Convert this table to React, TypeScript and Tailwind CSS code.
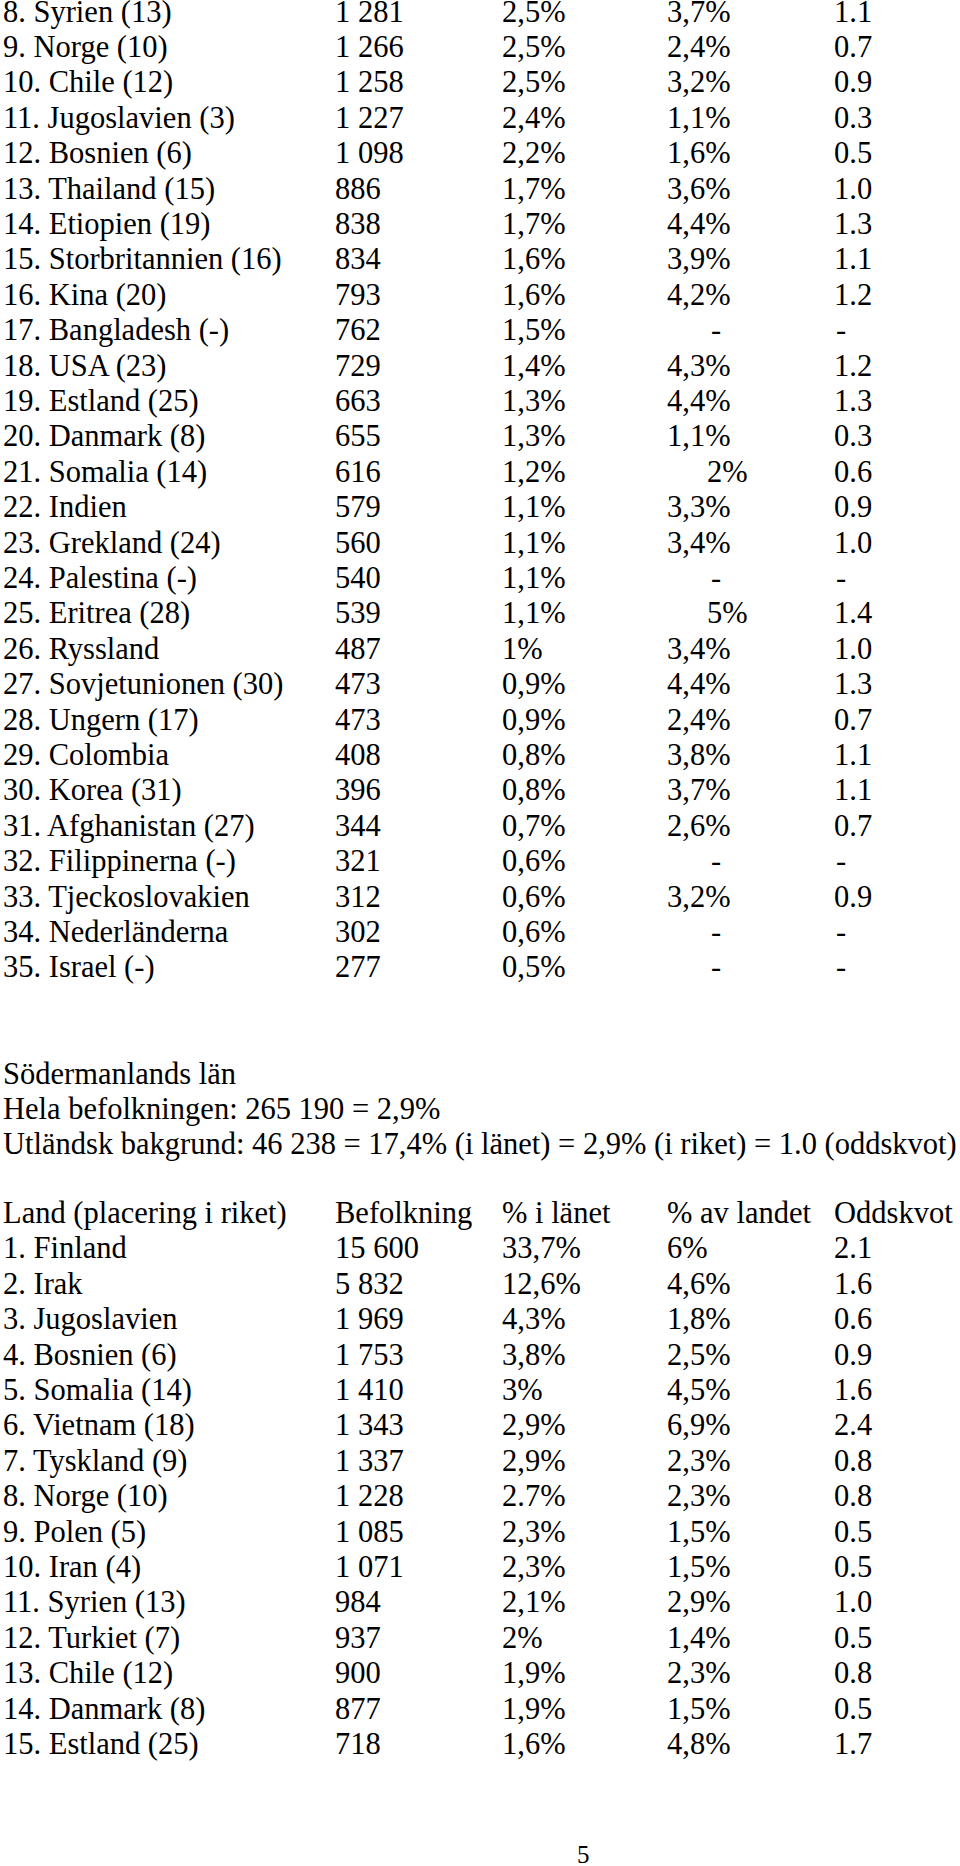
type Rad = [string, string, string, string, string];

// Riket: placering 8–35 (fortsättning från föregående sida)
const riket: Rad[] = [
  ["8. Syrien (13)", "1 281", "2,5%", "3,7%", "1.1"],
  ["9. Norge (10)", "1 266", "2,5%", "2,4%", "0.7"],
  ["10. Chile (12)", "1 258", "2,5%", "3,2%", "0.9"],
  ["11. Jugoslavien (3)", "1 227", "2,4%", "1,1%", "0.3"],
  ["12. Bosnien (6)", "1 098", "2,2%", "1,6%", "0.5"],
  ["13. Thailand (15)", "886", "1,7%", "3,6%", "1.0"],
  ["14. Etiopien (19)", "838", "1,7%", "4,4%", "1.3"],
  ["15. Storbritannien (16)", "834", "1,6%", "3,9%", "1.1"],
  ["16. Kina (20)", "793", "1,6%", "4,2%", "1.2"],
  ["17. Bangladesh (-)", "762", "1,5%", "-", "-"],
  ["18. USA (23)", "729", "1,4%", "4,3%", "1.2"],
  ["19. Estland (25)", "663", "1,3%", "4,4%", "1.3"],
  ["20. Danmark (8)", "655", "1,3%", "1,1%", "0.3"],
  ["21. Somalia (14)", "616", "1,2%", "2%", "0.6"],
  ["22. Indien", "579", "1,1%", "3,3%", "0.9"],
  ["23. Grekland (24)", "560", "1,1%", "3,4%", "1.0"],
  ["24. Palestina (-)", "540", "1,1%", "-", "-"],
  ["25. Eritrea (28)", "539", "1,1%", "5%", "1.4"],
  ["26. Ryssland", "487", "1%", "3,4%", "1.0"],
  ["27. Sovjetunionen (30)", "473", "0,9%", "4,4%", "1.3"],
  ["28. Ungern (17)", "473", "0,9%", "2,4%", "0.7"],
  ["29. Colombia", "408", "0,8%", "3,8%", "1.1"],
  ["30. Korea (31)", "396", "0,8%", "3,7%", "1.1"],
  ["31. Afghanistan (27)", "344", "0,7%", "2,6%", "0.7"],
  ["32. Filippinerna (-)", "321", "0,6%", "-", "-"],
  ["33. Tjeckoslovakien", "312", "0,6%", "3,2%", "0.9"],
  ["34. Nederländerna", "302", "0,6%", "-", "-"],
  ["35. Israel (-)", "277", "0,5%", "-", "-"],
];

const sodermanland: Rad[] = [
  ["1. Finland", "15 600", "33,7%", "6%", "2.1"],
  ["2. Irak", "5 832", "12,6%", "4,6%", "1.6"],
  ["3. Jugoslavien", "1 969", "4,3%", "1,8%", "0.6"],
  ["4. Bosnien (6)", "1 753", "3,8%", "2,5%", "0.9"],
  ["5. Somalia (14)", "1 410", "3%", "4,5%", "1.6"],
  ["6. Vietnam (18)", "1 343", "2,9%", "6,9%", "2.4"],
  ["7. Tyskland (9)", "1 337", "2,9%", "2,3%", "0.8"],
  ["8. Norge (10)", "1 228", "2.7%", "2,3%", "0.8"],
  ["9. Polen (5)", "1 085", "2,3%", "1,5%", "0.5"],
  ["10. Iran (4)", "1 071", "2,3%", "1,5%", "0.5"],
  ["11. Syrien (13)", "984", "2,1%", "2,9%", "1.0"],
  ["12. Turkiet (7)", "937", "2%", "1,4%", "0.5"],
  ["13. Chile (12)", "900", "1,9%", "2,3%", "0.8"],
  ["14. Danmark (8)", "877", "1,9%", "1,5%", "0.5"],
  ["15. Estland (25)", "718", "1,6%", "4,8%", "1.7"],
];

const grid = "grid grid-cols-[332px_167px_165px_167px_1fr] whitespace-nowrap";

// I första tabellen står korta värden och streck något indraget i kolumn 4
function Rad({ rad, indrag, className = "" }: { rad: Rad; indrag?: boolean; className?: string }) {
  const [land, bef, lan, landet, odds] = rad;
  let c4 = "";
  if (indrag && landet === "-") c4 = "pl-[44px]";
  else if (indrag && landet.length === 2) c4 = "pl-[40px]";
  return (
    <div className={`${grid} ${className}`}>
      <span>{land}</span>
      <span>{bef}</span>
      <span>{lan}</span>
      <span className={c4}>{landet}</span>
      <span className={odds === "-" ? "pl-[2px]" : ""}>{odds}</span>
    </div>
  );
}

export default function App() {
  return (
    <main className="min-h-[1866px] bg-white text-black font-['Liberation_Serif','Times_New_Roman',serif] text-[30.5px] leading-[35.4px] flex flex-col pl-[3px] overflow-hidden">
      <section>
        {riket.map((r, i) => (
          // första raden sitter tätt mot sidans överkant
          <Rad key={r[0]} rad={r} indrag className={i === 0 ? "leading-[24.4px] mb-[5.5px]" : ""} />
        ))}
      </section>

      <section className="mt-[70.8px] whitespace-nowrap">
        <p>Södermanlands län</p>
        <p>Hela befolkningen: 265 190 = 2,9%</p>
        <p>Utländsk bakgrund: 46 238 = 17,4% (i länet) = 2,9% (i riket) = 1.0 (oddskvot)</p>
      </section>

      <section className="mt-[33px]">
        <Rad rad={["Land (placering i riket)", "Befolkning", "% i länet", "% av landet", "Oddskvot"]} />
        {sodermanland.map((r) => (
          <Rad key={r[0]} rad={r} />
        ))}
      </section>

      <footer className="mt-[79px] pl-[574px] text-[25px] leading-[28px]">5</footer>
    </main>
  );
}
